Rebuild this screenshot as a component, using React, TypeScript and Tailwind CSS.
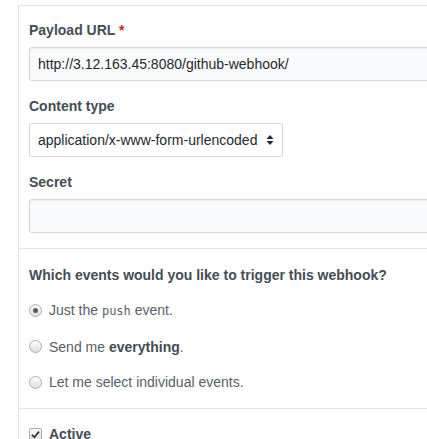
import React from "react";

function Radio({ checked }: { checked?: boolean }) {
  return (
    <span className="relative inline-flex h-[13px] w-[13px] shrink-0 items-center justify-center rounded-full border border-[#a9adb3] bg-gradient-to-b from-[#fdfdfd] to-[#dcdee1]">
      {checked && <span className="h-[5px] w-[5px] rounded-full bg-[#555b63]" />}
    </span>
  );
}

export default function App() {
  const font = { fontFamily: '"Liberation Sans", Arial, sans-serif' };
  const labelClass = "block text-[14px] leading-[20px] font-bold text-[#444d56]";
  const inputClass =
    "block h-[34px] w-full rounded-[3px] border border-[#d1d5da] bg-[#fafbfc] px-2 text-[14px] text-[#24292e] shadow-[inset_0_1px_2px_rgba(27,31,35,0.075)]";

  return (
    <div className="h-[439px] w-[427px] overflow-hidden bg-white pl-[18px] pt-[5px]" style={font}>
      <div className="border-l border-t border-[#e1e4e8] pl-[10px]">
        {/* Payload URL */}
        <div className="pt-[14px]">
          <label className={labelClass}>
            Payload URL <span className="text-[#cb2431]">*</span>
          </label>
          <div className="mt-[7px] -mr-[40px]">
            <div className={inputClass + " flex items-center"}>
              http://3.12.163.45:8080/github-webhook/
            </div>
          </div>
        </div>

        {/* Content type */}
        <div className="pt-[15px]">
          <label className={labelClass}>Content type</label>
          <div className="mt-[7px] flex h-[34px] w-[254px] items-center justify-between rounded-[3px] border border-[#d1d5da] bg-white pl-2 pr-[8px] text-[14px] text-[#24292e]">
            <span>application/x-www-form-urlencoded</span>
            <svg width="8" height="12" viewBox="0 0 8 12" className="text-[#24292e]">
              <path d="M4 1 L7.5 5 H0.5 Z M4 11 L0.5 7 H7.5 Z" fill="currentColor" />
            </svg>
          </div>
        </div>

        {/* Secret */}
        <div className="pt-[15px]">
          <label className={labelClass}>Secret</label>
          <div className="mt-[7px] -mr-[40px]">
            <div className={inputClass} />
          </div>
        </div>

        <div className="-ml-[10px] mt-[15px] border-t border-[#e1e4e8]" />

        {/* Events */}
        <div className="pt-[16px]">
          <p className={labelClass}>Which events would you like to trigger this webhook?</p>
          <div className="mt-[15px] flex flex-col gap-[15.5px] text-[14px] leading-[20px] text-[#586069]">
            <label className="flex items-center gap-[7px]">
              <Radio checked />
              <span>
                Just the{" "}
                <code className="text-[12px]" style={{ fontFamily: '"DejaVu Sans Mono", "Liberation Mono", monospace' }}>
                  push
                </code>{" "}
                event.
              </span>
            </label>
            <label className="flex items-center gap-[7px]">
              <Radio />
              <span>
                Send me <b className="text-[#444d56]">everything</b>.
              </span>
            </label>
            <label className="flex items-center gap-[7px]">
              <Radio />
              <span>Let me select individual events.</span>
            </label>
          </div>
        </div>

        <div className="-ml-[10px] mt-[16px] border-t border-[#e1e4e8]" />

        <div className="pt-[15px]">
          <label className="flex items-center gap-[7px] text-[14px] leading-[20px] font-bold text-[#444d56]">
            <span className="flex h-[13px] w-[13px] items-center justify-center rounded-[2px] border border-[#a9adb3] bg-gradient-to-b from-[#fdfdfd] to-[#dcdee1]">
              <svg width="9" height="9" viewBox="0 0 9 9">
                <path d="M1 4.8 L3.4 7.2 L8 1.6" stroke="#333" strokeWidth="1.8" fill="none" />
              </svg>
            </span>
            Active
          </label>
        </div>
      </div>
    </div>
  );
}
